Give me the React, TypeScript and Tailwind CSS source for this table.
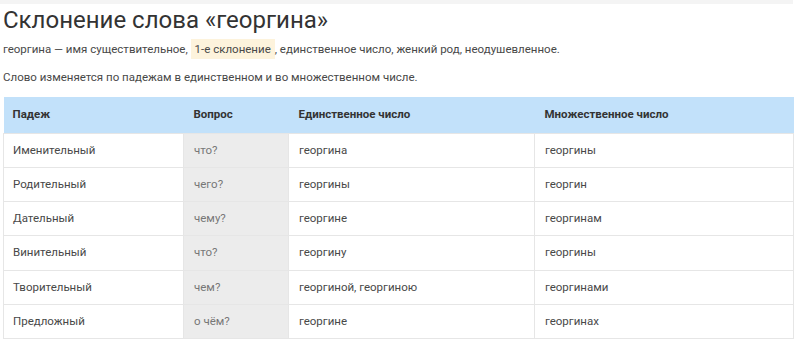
import React from 'react';

const rows = [
  ['Именительный', 'что?', 'георгина', 'георгины'],
  ['Родительный', 'чего?', 'георгины', 'георгин'],
  ['Дательный', 'чему?', 'георгине', 'георгинам'],
  ['Винительный', 'что?', 'георгину', 'георгины'],
  ['Творительный', 'чем?', 'георгиной, георгиною', 'георгинами'],
  ['Предложный', 'о чём?', 'георгине', 'георгинах'],
];

function App() {
  return (
    <div className="bg-white min-h-screen font-['Roboto',sans-serif] text-[#484848]">
      <div className="h-[4px] w-[793px] bg-[#f4f4f4]" />
      <div className="pl-[3px] w-[793px]">
        <h1 className="text-[24px] leading-[30px] text-[#333] mt-[1px]">Склонение слова «георгина»</h1>
        <p className="text-[11.5px] leading-[20px] mt-[4px]">
          георгина — имя существительное,{' '}
          <span className="bg-[#fdf3dc] px-[4px] py-[3px]">1-е склонение</span>, единственное число, женкий род, неодушевленное.
        </p>
        <p className="text-[11.5px] leading-[20px] mt-[8px]">
          Слово изменяется по падежам в единственном и во множественном числе.
        </p>
        <table className="mt-[10px] w-[790px] border-collapse text-[11.5px] table-fixed">
          <colgroup>
            <col className="w-[180px]" />
            <col className="w-[105px]" />
            <col className="w-[246px]" />
            <col className="w-[259px]" />
          </colgroup>
          <thead>
            <tr className="bg-[#c2e1fa] h-[36px] text-left text-[#333]">
              <th className="font-bold pl-[9px]">Падеж</th>
              <th className="font-bold pl-[10px]">Вопрос</th>
              <th className="font-bold pl-[10px]">Единственное число</th>
              <th className="font-bold pl-[10px]">Множественное число</th>
            </tr>
          </thead>
          <tbody>
            {rows.map((r) => (
              <tr key={r[0]} className="h-[34.3px]">
                <td className="border border-[#e6e6e6] pl-[9px]">{r[0]}</td>
                <td className="border border-[#e6e6e6] bg-[#ececec] pl-[10px] text-[#777]">{r[1]}</td>
                <td className="border border-[#e6e6e6] pl-[10px]">{r[2]}</td>
                <td className="border border-[#e6e6e6] pl-[10px]">{r[3]}</td>
              </tr>
            ))}
          </tbody>
        </table>
      </div>
    </div>
  );
}

export default App;
